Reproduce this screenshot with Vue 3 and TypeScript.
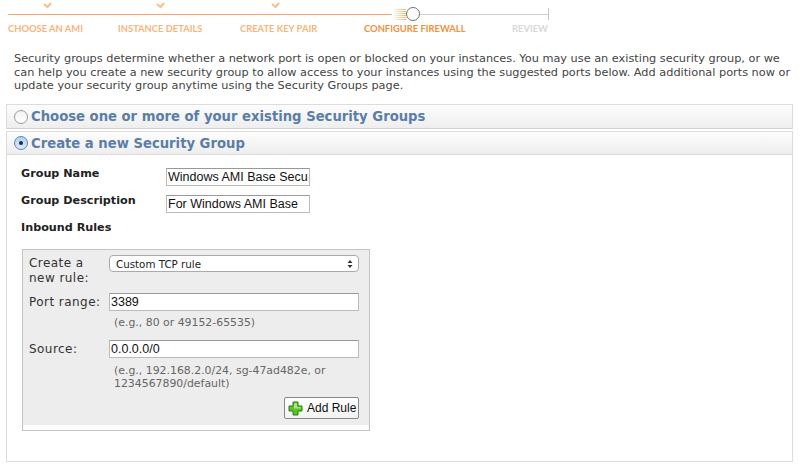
<script setup lang="ts">
interface Step {
  label: string
  state: 'done' | 'current' | 'todo'
  width: number
}

const steps: Step[] = [
  { label: 'CHOOSE AN AMI', state: 'done', width: 110 },
  { label: 'INSTANCE DETAILS', state: 'done', width: 122 },
  { label: 'CREATE KEY PAIR', state: 'done', width: 124 },
  { label: 'CONFIGURE FIREWALL', state: 'current', width: 148 },
  { label: 'REVIEW', state: 'todo', width: 37 },
]
</script>

<template>
  <div class="page">
    <div class="wizard">
      <div class="checks">
        <svg v-for="n in 3" :key="n" class="check" width="9" height="7" viewBox="0 0 9 7">
          <path d="M1 2 L4.5 5 L8 1" fill="none" stroke="#f5c08c" stroke-width="2" />
        </svg>
      </div>
      <div class="track">
        <div class="track-done"></div>
        <div class="track-fade"></div>
        <div class="track-dot"></div>
        <div class="track-todo"></div>
      </div>
      <div class="steps">
        <span
          v-for="step in steps"
          :key="step.label"
          class="step"
          :class="step.state"
          :style="{ width: step.width + 'px' }"
        >{{ step.label }}</span>
      </div>
    </div>

    <p class="intro">
      Security groups determine whether a network port is open or blocked on your instances. You may use an existing security group, or we<br />
      can help you create a new security group to allow access to your instances using the suggested ports below. Add additional ports now or<br />
      update your security group anytime using the Security Groups page.
    </p>

    <div class="accordion">
      <div class="head">
        <span class="radio"></span>
        <span class="head-title">Choose one or more of your existing Security Groups</span>
      </div>
      <div class="head second">
        <span class="radio on"><i></i></span>
        <span class="head-title">Create a new Security Group</span>
      </div>
      <div class="body">
        <div class="field">
          <label class="field-label">Group Name</label>
          <input class="text" type="text" value="Windows AMI Base Security" />
        </div>
        <div class="field">
          <label class="field-label">Group Description</label>
          <input class="text" type="text" value="For Windows AMI Base" />
        </div>
        <div class="field-label inbound">Inbound Rules</div>

        <div class="rule-box">
          <div class="rule-inner">
            <div class="rule-row">
              <label class="rule-label">Create a<br />new rule:</label>
              <div class="select">
                <span>Custom TCP rule</span>
                <svg width="6" height="10" viewBox="0 0 6 10">
                  <path d="M3 1 L5.5 4 H0.5 Z M3 9 L5.5 6 H0.5 Z" fill="#333" />
                </svg>
              </div>
            </div>
            <div class="rule-row port">
              <label class="rule-label">Port range:</label>
              <input class="wide" type="text" value="3389" />
            </div>
            <div class="hint">(e.g., 80 or 49152-65535)</div>
            <div class="rule-row source">
              <label class="rule-label">Source:</label>
              <input class="wide" type="text" value="0.0.0.0/0" />
            </div>
            <div class="hint hint-source">(e.g., 192.168.2.0/24, sg-47ad482e, or<br />1234567890/default)</div>
            <div class="actions">
              <button class="add" type="button">
                <svg width="15" height="15" viewBox="0 0 15 15">
                  <path d="M5 1 H10 V5 H14 V10 H10 V14 H5 V10 H1 V5 H5 Z" fill="#5cc22c" stroke="#2e7d12" stroke-width="1" />
                  <path d="M6 2.2 H9 V6 H12.8 V7.5 H6 Z" fill="#a8e87c" />
                </svg>
                <span>Add Rule</span>
              </button>
            </div>
          </div>
        </div>
      </div>
    </div>
  </div>
</template>

<style>
html,
body {
  background: #fff;
}
</style>

<style scoped>
.page {
  width: 800px;
  height: 470px;
  overflow: hidden;
  background: #fff;
  font-family: "DejaVu Sans", Verdana, sans-serif;
  color: #333;
}

.wizard {
  padding: 2px 0 0 8px;
  height: 49px;
  box-sizing: border-box;
}

.checks {
  display: flex;
  height: 7px;
  padding-left: 35px;
  gap: 104px;
}

.checks .check:nth-child(3) {
  margin-left: 2px;
}

.track {
  display: flex;
  align-items: center;
  height: 14px;
  margin-top: -2px;
  width: 541px;
}

.track-done {
  width: 384px;
  height: 1px;
  background: #f5a55c;
}

.track-fade {
  width: 14px;
  height: 11px;
  background: repeating-linear-gradient(180deg, rgba(245, 150, 60, 0.75) 0 1px, transparent 1px 2px);
  mask-image: linear-gradient(90deg, transparent, #000);
}

.track-dot {
  width: 14px;
  height: 14px;
  flex: none;
  box-sizing: border-box;
  border: 1.5px solid #707070;
  border-radius: 50%;
  background: #fff;
}

.track-todo {
  flex: 1;
  height: 1px;
  background: #ccc;
  position: relative;
}

.track-todo::after {
  content: "";
  position: absolute;
  right: 0;
  top: -6px;
  width: 1px;
  height: 12px;
  background: #c4c4c4;
}

.steps {
  display: flex;
  margin-top: 1px;
  font-family: Lato, "Open Sans", sans-serif;
  font-size: 9.4px;
  font-weight: 700;
  line-height: 14px;
  white-space: nowrap;
}

.step.done {
  color: #f5b67c;
}

.step.current {
  color: #f0923a;
}

.step.todo {
  color: #d8d8d8;
}

.intro {
  margin: 0;
  padding: 3px 0 0 14px;
  font-size: 11.3px;
  line-height: 13.5px;
  color: #444;
  white-space: nowrap;
  height: 55px;
  box-sizing: border-box;
}

.accordion {
  margin-left: 6px;
  width: 787px;
}

.head {
  height: 25px;
  box-sizing: border-box;
  display: flex;
  align-items: center;
  gap: 3px;
  padding-left: 7px;
  border: 1px solid #dcdcdc;
  border-bottom-color: #d2d2d2;
  background: linear-gradient(180deg, #fdfdfd, #eeeeee);
}

.head.second {
  margin-top: 2px;
  height: 24px;
  border-bottom-color: #dcdcdc;
}

.head-title {
  font-size: 13.2px;
  font-weight: 700;
  color: #5a7ea8;
  white-space: nowrap;
}

.radio {
  width: 14px;
  height: 14px;
  box-sizing: border-box;
  border-radius: 50%;
  border: 1px solid #9a9a9a;
  background: linear-gradient(180deg, #f2f2f2, #fff);
  display: flex;
  align-items: center;
  justify-content: center;
}

.radio.on {
  border-color: #5f86b5;
  background: linear-gradient(180deg, #b4d0ee, #dcebfa);
}

.radio.on i {
  width: 4px;
  height: 4px;
  border-radius: 50%;
  background: #1c2c44;
}

.body {
  height: 307px;
  box-sizing: border-box;
  border: 1px solid #dcdcdc;
  border-top: 0;
  padding: 10px 0 0 14px;
}

.field {
  display: flex;
  height: 27px;
}

.field-label {
  width: 145px;
  font-size: 11.2px;
  font-weight: 700;
  color: #222;
  line-height: 17px;
}

.field .text {
  width: 144px;
  height: 18px;
  margin-top: 3px;
  box-sizing: border-box;
  border: 1px solid #bbb;
  border-top-color: #999;
  padding: 0 1px;
  font-family: "Liberation Sans", Arial, sans-serif;
  font-size: 12.5px;
  color: #111;
  outline: none;
}

.inbound {
  width: auto;
  height: 20px;
}

.rule-box {
  margin: 10px 0 0 1px;
  width: 348px;
  height: 182px;
  box-sizing: border-box;
  border: 1px solid #c4c4c4;
  padding-bottom: 5px;
  background: #fff;
}

.rule-inner {
  height: 100%;
  background: #ededed;
  padding: 6px 10px 0 6px;
  box-sizing: border-box;
}

.rule-row {
  display: flex;
  align-items: flex-start;
}

.rule-label {
  width: 80px;
  flex: none;
  font-size: 12px;
  letter-spacing: 0.45px;
  line-height: 15px;
  color: #333;
  white-space: nowrap;
}

.select {
  flex: none;
  width: 250px;
  height: 17px;
  margin-top: -1px;
  box-sizing: border-box;
  border: 1px solid #aaa;
  border-radius: 4px;
  background: #fff;
  padding: 0 5px 0 6px;
  display: flex;
  align-items: center;
  justify-content: space-between;
  font-size: 10.3px;
  color: #222;
}

.port {
  margin-top: 7px;
}

.port .rule-label,
.source .rule-label {
  margin-top: 2px;
}

.source {
  margin-top: 11px;
}

.wide {
  flex: none;
  width: 250px;
  height: 18px;
  box-sizing: border-box;
  border: 1px solid #bbb;
  border-top-color: #999;
  padding: 0 1px;
  font-family: "Liberation Sans", Arial, sans-serif;
  font-size: 12.5px;
  color: #111;
  outline: none;
}

.hint {
  margin: 5px 0 0 85px;
  font-size: 10.9px;
  line-height: 13px;
  color: #666;
  white-space: nowrap;
}

.hint-source {
  margin-top: 6px;
}

.actions {
  display: flex;
  justify-content: flex-end;
  margin-top: 7px;
}

.add {
  width: 75px;
  height: 22px;
  display: flex;
  align-items: center;
  gap: 4px;
  padding: 0 0 0 3px;
  border: 1px solid #888;
  border-radius: 2px;
  background: linear-gradient(180deg, #fff, #f2f2f2);
  font-family: "Liberation Sans", Arial, sans-serif;
  font-size: 12px;
  color: #111;
  white-space: nowrap;
}
</style>
